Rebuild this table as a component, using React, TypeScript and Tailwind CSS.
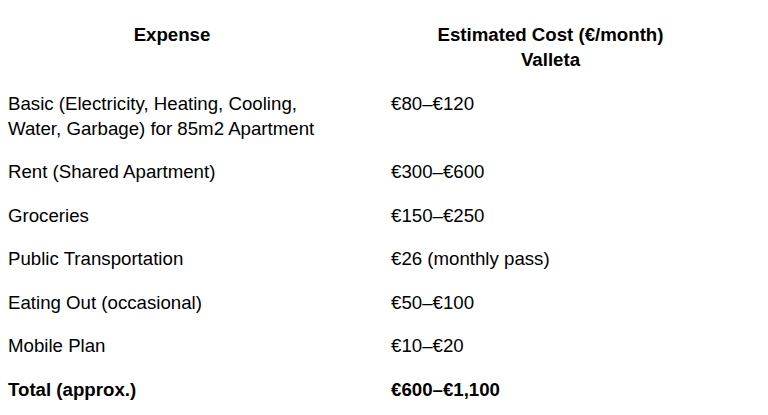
import React from "react";

const rows: { expense: React.ReactNode; cost: string; bold?: boolean }[] = [
  {
    expense: (
      <>
        Basic (Electricity, Heating, Cooling,
        <br />
        Water, Garbage) for 85m2 Apartment
      </>
    ),
    cost: "€80–€120",
  },
  { expense: "Rent (Shared Apartment)", cost: "€300–€600" },
  { expense: "Groceries", cost: "€150–€250" },
  { expense: "Public Transportation", cost: "€26 (monthly pass)" },
  { expense: "Eating Out (occasional)", cost: "€50–€100" },
  { expense: "Mobile Plan", cost: "€10–€20" },
  { expense: "Total (approx.)", cost: "€600–€1,100", bold: true },
];

export default function App() {
  return (
    <div className="w-[768px] h-[415px] overflow-hidden bg-white text-black font-['Liberation_Sans',Arial,sans-serif] text-[18.67px] leading-[25px] pt-[13px]">
      <div className="grid grid-cols-[344px_335px] gap-x-[39px]">
        {/* header */}
        <div className="px-2 py-[9.25px] font-bold text-center">Expense</div>
        <div className="px-2 py-[9.25px] font-bold text-center">
          Estimated Cost (€/month)
          <br />
          Valleta
        </div>

        {rows.map((r, i) => (
          <React.Fragment key={i}>
            <div className={`px-2 py-[9.25px] ${r.bold ? "font-bold" : ""}`}>{r.expense}</div>
            <div className={`px-2 py-[9.25px] ${r.bold ? "font-bold" : ""}`}>{r.cost}</div>
          </React.Fragment>
        ))}
      </div>
    </div>
  );
}
